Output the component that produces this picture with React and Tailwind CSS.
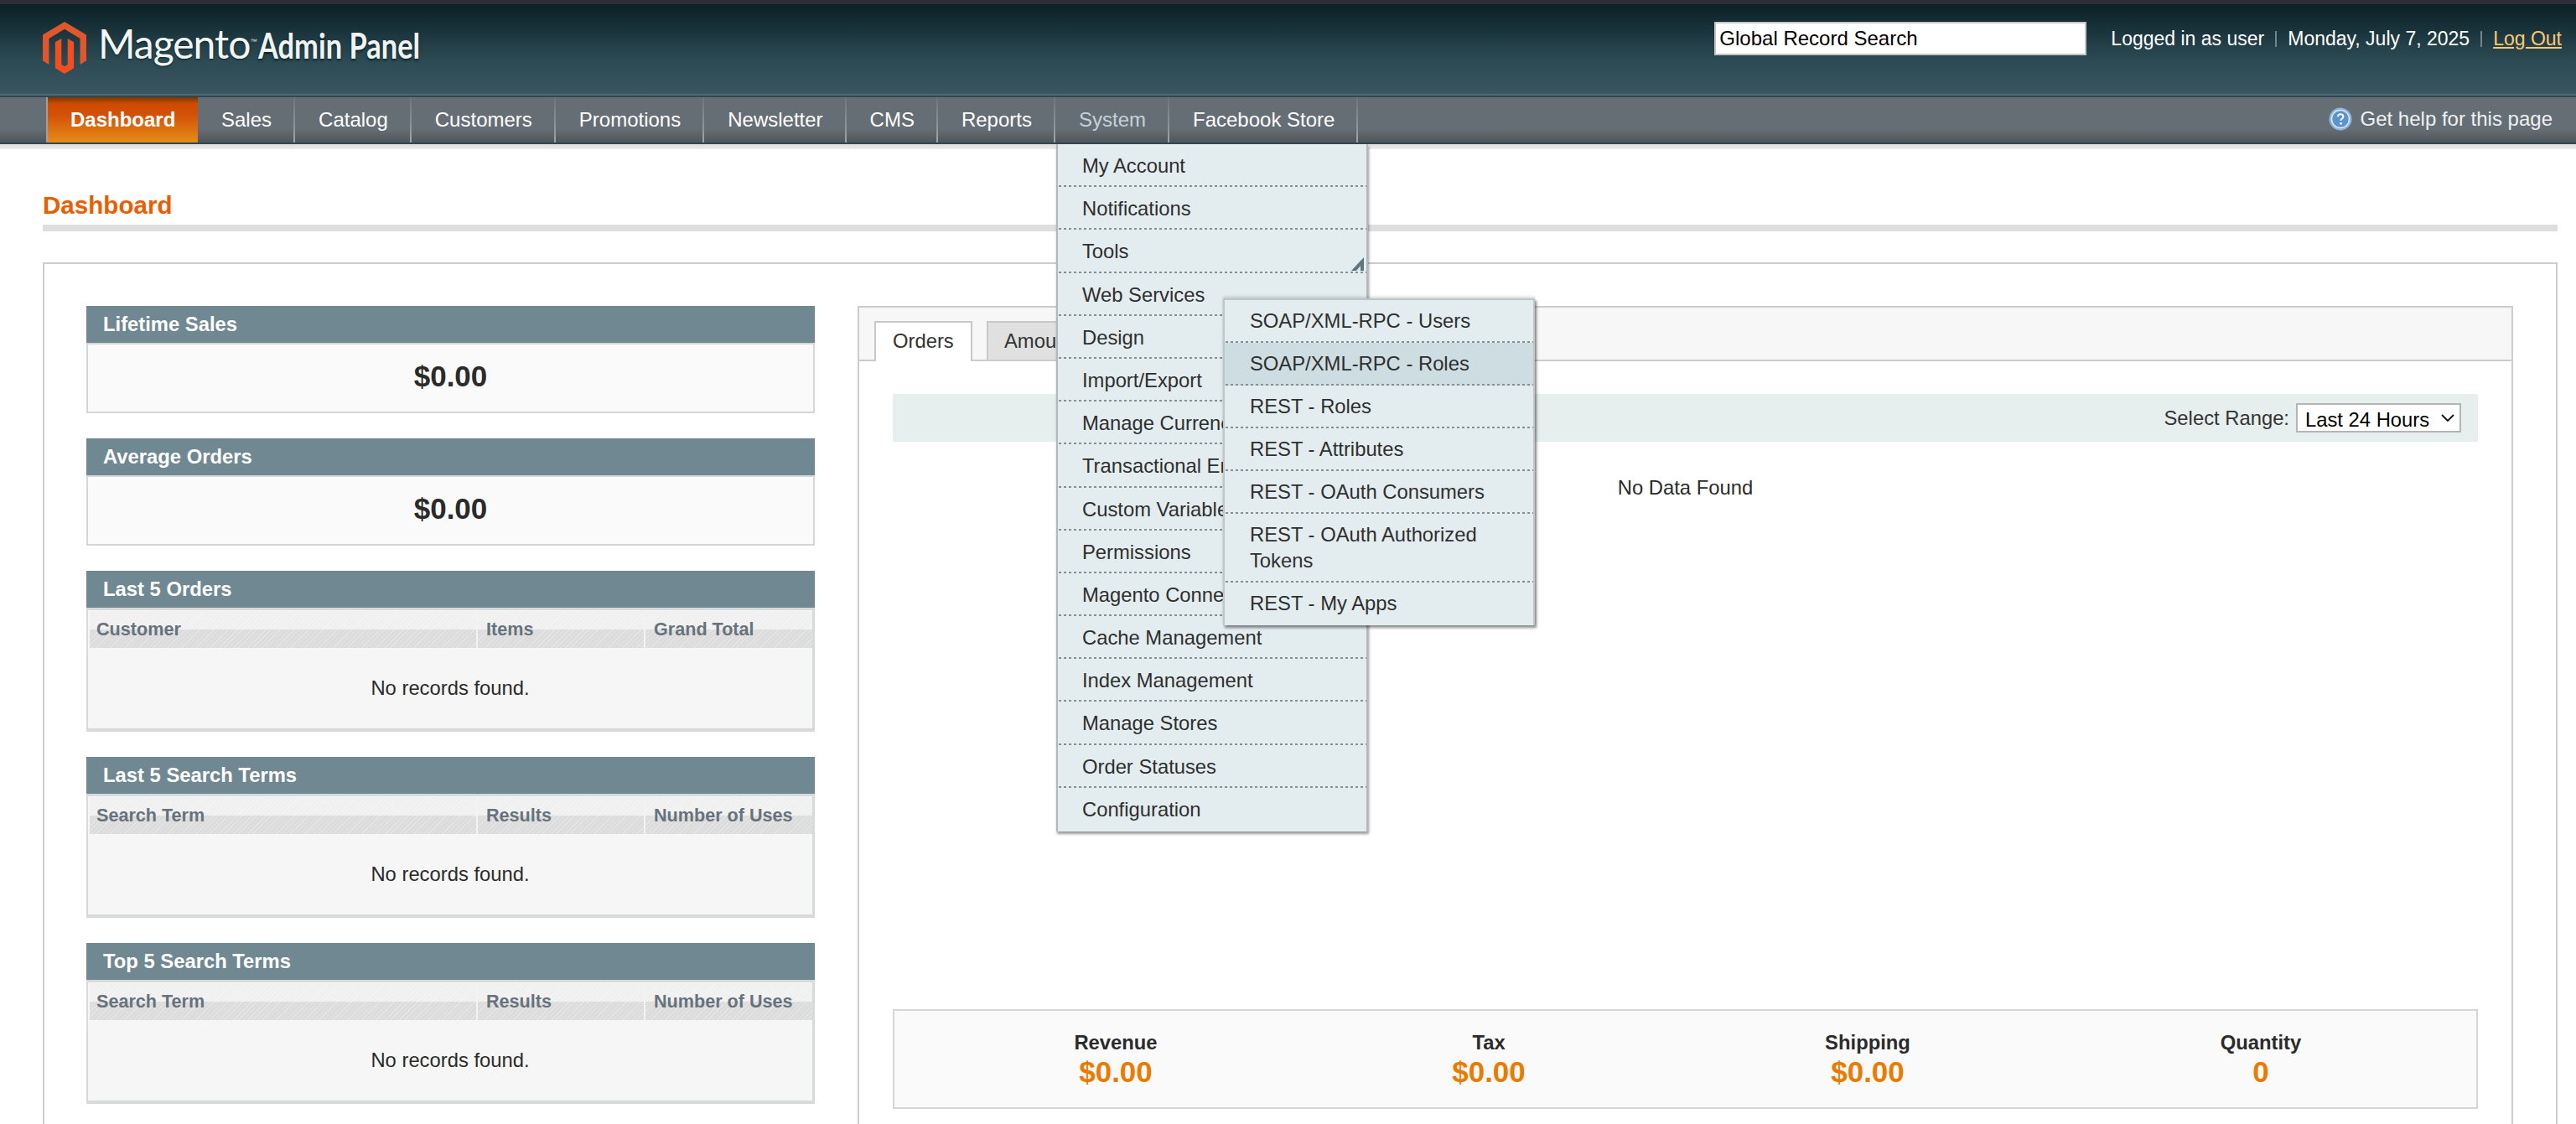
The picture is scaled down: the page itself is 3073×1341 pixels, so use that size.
import { useState } from 'react'

const navItems = ['Sales', 'Catalog', 'Customers', 'Promotions', 'Newsletter', 'CMS', 'Reports', 'System', 'Facebook Store']

const systemMenu = [
  'My Account', 'Notifications', 'Tools', 'Web Services', 'Design', 'Import/Export', 'Manage Currency',
  'Transactional Emails', 'Custom Variables', 'Permissions', 'Magento Connect', 'Cache Management',
  'Index Management', 'Manage Stores', 'Order Statuses', 'Configuration',
]

const webServices = [
  'SOAP/XML-RPC - Users', 'SOAP/XML-RPC - Roles', 'REST - Roles', 'REST - Attributes',
  'REST - OAuth Consumers', 'REST - OAuth Authorized Tokens', 'REST - My Apps',
]

const totals = [
  { label: 'Revenue', value: '$0.00' },
  { label: 'Tax', value: '$0.00' },
  { label: 'Shipping', value: '$0.00' },
  { label: 'Quantity', value: '0' },
]

// dotted row divider, the browser's own dotted border is too tight
const dots = 'bg-[linear-gradient(to_right,#868f92_50%,transparent_50%)] bg-[length:6px_2px] bg-bottom bg-repeat-x'

function Logo() {
  return (
    <div className="flex items-start ml-[51px] mt-[21px]">
      <svg viewBox="1.6 0 20.8 24" preserveAspectRatio="none" className="w-[52px] h-[62px]">
        <path fill="#e2562c" d="M22.391 6v12l-2.969 1.714V7.713L12 3.43 4.574 7.713v12.001L1.609 18V6L12 0l10.391 6z" />
        <path fill="#f34e20" d="M12 24l-4.455-2.572v-12l2.97-1.715v12.001l1.485.902 1.485-.902V7.713l2.971 1.715v12L12 24z" />
      </svg>
      <span className="ml-[14px] mt-[-2px] [font-family:Lato,sans-serif] text-[48px] leading-[56px] tracking-[-1px] text-[#f4f6f6] [text-shadow:0_1px_2px_#0b2226]">Magento</span>
      <span className="mt-[18px] text-[8px] text-[#e8eeee]">™</span>
      <span className="ml-[2px] mt-[6px] origin-left scale-x-[0.82] [font-family:Lato,sans-serif] font-bold text-[42px] leading-[44px] text-[#f0f3f3] whitespace-nowrap [text-shadow:0_2px_3px_#0b2226]">Admin Panel</span>
    </div>
  )
}

function HelpIcon() {
  return (
    <svg viewBox="0 0 28 28" className="w-[28px] h-[28px] shrink-0">
      <circle cx="14" cy="14" r="13.5" fill="#8fb6da" />
      <circle cx="14" cy="14" r="10.5" fill="#5a93cd" stroke="#d8e7f4" strokeWidth="1.5" />
      <path d="M10.8 11.2c.3-1.9 1.6-2.9 3.4-2.9 1.9 0 3.2 1.1 3.2 2.7 0 1.3-.7 2-1.7 2.7-.9.6-1.2 1-1.2 2" fill="none" stroke="#fff" strokeWidth="2" />
      <circle cx="14.5" cy="19.3" r="1.4" fill="#fff" />
    </svg>
  )
}

function ToolsArrow() {
  return (
    <svg viewBox="0 0 15 16" className="absolute right-[3px] bottom-[3px] w-[15px] h-[16px]">
      <path d="M0 16 15 0v16z" fill="#5f7580" />
      <path d="M6 16 11 10v6z" fill="#dfe8eb" />
    </svg>
  )
}

function SubMenu() {
  return (
    <ul className="absolute z-30 left-[197px] top-[30px] w-[372px] bg-[#e3ecee] border-2 border-b-0 border-[#c0c5c7] whitespace-normal shadow-[2px_3px_3px_rgba(0,0,0,0.45),0_-2px_3px_rgba(0,0,0,0.15)]">
      {webServices.map((item, i) => (
        <li
          key={item}
          className={`px-[30px] pt-[9px] pb-[11px] leading-[31px] text-[#2f2f2f] ${i === 6 ? '' : dots} ${item === 'SOAP/XML-RPC - Roles' ? 'bg-[#cedde1]' : ''}`}
        >
          {item}
        </li>
      ))}
    </ul>
  )
}

function SystemDropdown() {
  return (
    <ul className="absolute z-20 left-[1px] top-[56px] w-[372px] h-[820px] bg-[#e3ecee] border-x-2 border-[#b4b8ba] shadow-[1px_3px_3px_rgba(0,0,0,0.4)] text-[23.8px]">
      {systemMenu.map((item, i) => (
        <li
          key={item}
          className={`relative h-[51.2px] pl-[29px] pt-[10px] leading-[31px] whitespace-nowrap text-[#2f2f2f] ${i < 15 ? dots : ''}`}
        >
          {item}
          {item === 'Tools' && <ToolsArrow />}
          {item === 'Web Services' && <SubMenu />}
        </li>
      ))}
    </ul>
  )
}

function NavBar() {
  return (
    <nav className="relative h-[54px] flex justify-between bg-[linear-gradient(to_bottom,#666e75_0%,#666e75_70%,#4f565b_100%)] text-[24px] text-white">
      <ul className="flex ml-[55px]">
        <li className="h-[54px] w-[181px] pl-[27px] leading-[54px] font-bold border-l-2 border-l-[#9aa0a4] bg-[linear-gradient(to_bottom,#743804_0%,#cf4a00_14%,#d2520a_40%,#e68c17_100%)]">
          Dashboard
        </li>
        {navItems.map((item) => (
          <li
            key={item}
            className={`relative h-[54px] pl-[28px] pr-[26px] leading-[54px] border-r-2 [border-image:linear-gradient(to_bottom,#6d757c,#a0a5a9)_1] whitespace-nowrap ${item === 'System' ? 'text-[#c3d2d9]' : ''}`}
          >
            {item}
            {item === 'System' && <SystemDropdown />}
          </li>
        ))}
      </ul>
      <div className="flex items-center h-[54px] pb-[3px] pr-[28px] text-[#eef1f2]">
        <HelpIcon />
        <span className="ml-[10px]">Get help for this page</span>
      </div>
    </nav>
  )
}

function Header() {
  return (
    <header>
      <div className="h-[5px] bg-[#2d2d3a]" />
      <div className="h-[107px] flex justify-between bg-[linear-gradient(to_bottom,#0a2125_0%,#1a343c_30%,#2c4a53_62%,#3a5660_100%)]">
        <Logo />
        <div className="flex items-start pt-[21px] pr-[17px] text-[23px]">
          <input
            readOnly
            value="Global Record Search"
            className="w-[444px] h-[40px] px-[4px] bg-white border-2 border-[#c4c4c4] text-[24px] text-black outline-none"
          />
          <div className="flex items-center h-[40px] ml-[29px] text-white">
            <span>Logged in as user</span>
            <span className="mx-[13px] h-[19px] w-[2px] bg-[#6d858c]" />
            <span>Monday, July 7, 2025</span>
            <span className="mx-[13px] h-[19px] w-[2px] bg-[#6d858c]" />
            <a className="text-[#fdc872] underline">Log Out</a>
          </div>
        </div>
      </div>
      <div className="h-[2px] bg-[#4e6b73]" />
      <div className="h-[2px] bg-[#2f4753]" />
      <NavBar />
      <div className="h-[2px] bg-[#2f4753]" />
      <div className="h-[6px] bg-[linear-gradient(to_bottom,#dcdcdc,#ececec)]" />
    </header>
  )
}

function SectionHead({ title }) {
  return <div className="h-[44px] pl-[20px] bg-[#6f8892] text-white font-bold leading-[43px]">{title}</div>
}

function StatBox({ title, value }) {
  return (
    <section>
      <SectionHead title={title} />
      <div className="h-[84px] pt-[18px] bg-[#fafafa] border-2 border-[#d6d6d6] text-center text-[35px] leading-[40px] font-bold text-[#2b2b2b]">
        {value}
      </div>
    </section>
  )
}

function TableBox({ title, columns }) {
  return (
    <section>
      <SectionHead title={title} />
      <div className="h-[148px] flex flex-col border-2 border-t-[3px] border-[#d6dada] border-r-[3px] border-b-[4px] bg-[#f6f6f6]">
        <div className="h-[44px] mt-[1px] ml-[2px] grid grid-cols-[463px_200px_1fr] text-[21.6px] font-bold text-[#67727c] leading-[43px] bg-[repeating-linear-gradient(135deg,rgba(255,255,255,0.28)_0_1px,transparent_1px_4px),linear-gradient(to_bottom,#f0f0f0_50%,#dcdcdc_50%)]">
          {columns.map((col) => (
            <div key={col} className="pl-[10px] first:pl-[8px] border-r-2 border-[#f3f3f3] last:border-r-0">{col}</div>
          ))}
        </div>
        <div className="flex-1 flex items-center justify-center text-[#2b2b2b]">No records found.</div>
      </div>
    </section>
  )
}

function LeftColumn() {
  return (
    <div className="w-[869px] shrink-0 flex flex-col gap-[30px]">
      <StatBox title="Lifetime Sales" value="$0.00" />
      <StatBox title="Average Orders" value="$0.00" />
      <TableBox title="Last 5 Orders" columns={['Customer', 'Items', 'Grand Total']} />
      <TableBox title="Last 5 Search Terms" columns={['Search Term', 'Results', 'Number of Uses']} />
      <TableBox title="Top 5 Search Terms" columns={['Search Term', 'Results', 'Number of Uses']} />
    </div>
  )
}

function RangeSelect() {
  const [range, setRange] = useState('Last 24 Hours')
  return (
    <div className="relative ml-[8px]">
      <select
        value={range}
        onChange={(e) => setRange(e.target.value)}
        className="block w-[197px] h-[35px] pl-[9px] appearance-none bg-white border-2 border-[#b5b5b5] text-[23.8px] text-black"
      >
        <option>Last 24 Hours</option>
        <option>Last 7 Days</option>
      </select>
      <svg viewBox="0 0 16 9" className="absolute right-[8px] top-[13px] w-[16px] h-[9px] pointer-events-none">
        <path d="M1 1l7 7 7-7" fill="none" stroke="#111" strokeWidth="1.8" />
      </svg>
    </div>
  )
}

function RightColumn() {
  return (
    <div className="flex-1 mb-[40px] border-2 border-[#cccccc]">
      <div className="h-[64px] flex items-end pl-[18px] bg-[#f7f7f7] border-b-2 border-[#cccccc]">
        <div className="relative top-[2px] h-[48px] w-[117px] pl-[20px] leading-[44px] bg-white border-2 border-b-0 border-[#c8c8c8] text-[#333]">Orders</div>
        <div className="ml-[17px] h-[46px] w-[220px] pl-[19px] leading-[44px] bg-[#e0e0e0] border-2 border-b-0 border-[#c8c8c8] text-[#333]">Amounts</div>
      </div>
      <div className="px-[40px] pt-[39px]">
        <div className="h-[57px] flex items-center justify-end pr-[20px] bg-[#e7eeee] text-[#333]">
          Select Range:
          <RangeSelect />
        </div>
        <div className="h-[677px] pt-[39px] text-center leading-[32px] text-[#2b2b2b]">No Data Found</div>
        <div className="h-[119px] grid grid-cols-[528px_362px_542px_396px] items-center bg-[#fafafa] border-2 border-[#d6d6d6] text-center font-bold">
          {totals.map((t) => (
            <div key={t.label}>
              <div className="leading-[30px] text-[#2b2b2b]">{t.label}</div>
              <div className="text-[35px] leading-[40px] text-[#eb7a00]">{t.value}</div>
            </div>
          ))}
        </div>
      </div>
    </div>
  )
}

export default function App() {
  return (
    <div className="h-[1341px] overflow-hidden bg-white [font-family:'Liberation_Sans',Arial,sans-serif] text-[23.8px]">
      <Header />
      <main className="pl-[51px] pr-[22px]">
        <h1 className="mt-[49px] text-[29.6px] leading-[36px] font-bold text-[#eb5e00]">Dashboard</h1>
        <div className="mt-[5px] h-[8px] bg-[#dedede]" />
        <div className="mt-[37px] h-[1200px] flex gap-[51px] pl-[50px] pr-[51px] pt-[50px] border-2 border-[#cccccc]">
          <LeftColumn />
          <div className="flex-1 flex">
            <RightColumn />
          </div>
        </div>
      </main>
    </div>
  )
}
